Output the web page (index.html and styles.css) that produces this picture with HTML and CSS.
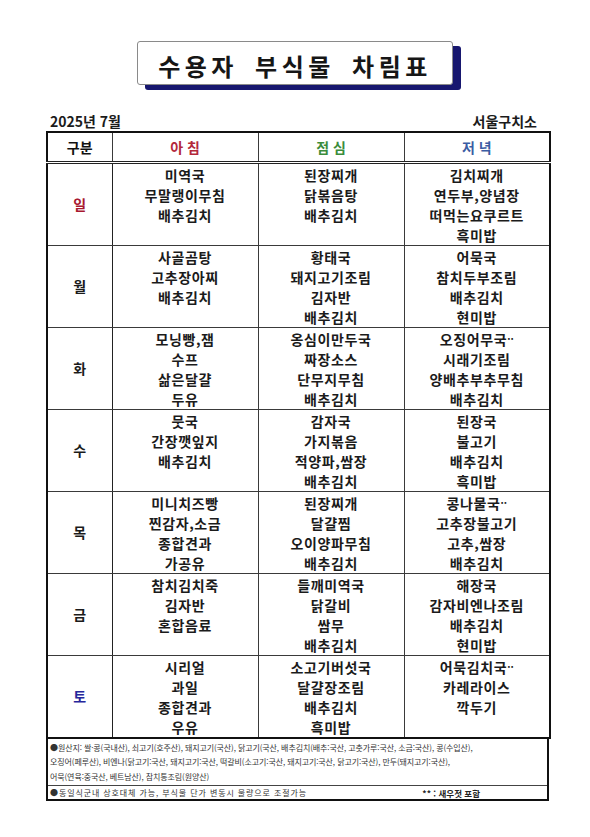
FILE: index.html
```html
<!DOCTYPE html>
<html lang="ko">
<head>
<meta charset="utf-8">
<title>수용자 부식물 차림표</title>
<link rel="stylesheet" href="styles.css">
</head>
<body>
<div class="page">
  <div class="title-wrap">
    <div class="title-box"><h1 class="title">수용자 부식물 차림표</h1></div>
  </div>
  <div class="sheet">
    <div class="meta">
      <span class="month">2025년 7월</span>
      <span class="org">서울구치소</span>
    </div>
    <table class="menu">
      <colgroup>
        <col class="c-day"><col class="c-meal"><col class="c-meal"><col class="c-meal">
      </colgroup>
      <thead>
        <tr>
          <th class="h-day">구분</th>
          <th class="h-bf">아 침</th>
          <th class="h-lu">점 심</th>
          <th class="h-di">저 녁</th>
        </tr>
      </thead>
      <tbody>
        <tr>
          <td class="day sun">일</td>
          <td class="meal"><div>미역국</div><div>무말랭이무침</div><div>배추김치</div></td>
          <td class="meal"><div>된장찌개</div><div>닭볶음탕</div><div>배추김치</div></td>
          <td class="meal"><div>김치찌개</div><div>연두부,양념장</div><div>떠먹는요쿠르트</div><div>흑미밥</div></td>
        </tr>
        <tr>
          <td class="day">월</td>
          <td class="meal"><div>사골곰탕</div><div>고추장아찌</div><div>배추김치</div></td>
          <td class="meal"><div>황태국</div><div>돼지고기조림</div><div>김자반</div><div>배추김치</div></td>
          <td class="meal"><div>어묵국</div><div>참치두부조림</div><div>배추김치</div><div>현미밥</div></td>
        </tr>
        <tr>
          <td class="day">화</td>
          <td class="meal"><div>모닝빵,잼</div><div>수프</div><div>삶은달걀</div><div>두유</div></td>
          <td class="meal"><div>옹심이만두국</div><div>짜장소스</div><div>단무지무침</div><div>배추김치</div></td>
          <td class="meal"><div>오징어무국<span class="mark">··</span></div><div>시래기조림</div><div>양배추부추무침</div><div>배추김치</div></td>
        </tr>
        <tr>
          <td class="day">수</td>
          <td class="meal"><div>뭇국</div><div>간장깻잎지</div><div>배추김치</div></td>
          <td class="meal"><div>감자국</div><div>가지볶음</div><div>적양파,쌈장</div><div>배추김치</div></td>
          <td class="meal"><div>된장국</div><div>불고기</div><div>배추김치</div><div>흑미밥</div></td>
        </tr>
        <tr>
          <td class="day">목</td>
          <td class="meal"><div>미니치즈빵</div><div>찐감자,소금</div><div>종합견과</div><div>가공유</div></td>
          <td class="meal"><div>된장찌개</div><div>달걀찜</div><div>오이양파무침</div><div>배추김치</div></td>
          <td class="meal"><div>콩나물국<span class="mark">··</span></div><div>고추장불고기</div><div>고추,쌈장</div><div>배추김치</div></td>
        </tr>
        <tr>
          <td class="day">금</td>
          <td class="meal"><div>참치김치죽</div><div>김자반</div><div>혼합음료</div></td>
          <td class="meal"><div>들깨미역국</div><div>닭갈비</div><div>쌈무</div><div>배추김치</div></td>
          <td class="meal"><div>해장국</div><div>감자비엔나조림</div><div>배추김치</div><div>현미밥</div></td>
        </tr>
        <tr>
          <td class="day sat">토</td>
          <td class="meal"><div>시리얼</div><div>과일</div><div>종합견과</div><div>우유</div></td>
          <td class="meal"><div>소고기버섯국</div><div>달걀장조림</div><div>배추김치</div><div>흑미밥</div></td>
          <td class="meal"><div>어묵김치국<span class="mark">··</span></div><div>카레라이스</div><div>깍두기</div></td>
        </tr>
      </tbody>
    </table>
    <div class="notes">
      <div class="origin">
        <p>●원산지: 쌀·콩(국내산), 쇠고기(호주산), 돼지고기(국산), 닭고기(국산, 배추김치(배추:국산, 고춧가루:국산, 소금:국산), 콩(수입산),</p>
        <p>오징어(페루산), 비엔나(닭고기:국산, 돼지고기:국산, 떡갈비(소고기:국산, 돼지고기:국산, 닭고기:국산), 만두(돼지고기:국산),</p>
        <p>어묵(연육:중국산, 베트남산), 참치통조림(원양산)</p>
      </div>
      <div class="notes-foot">
        <span class="sub">●동일식군내 상호대체 가능, 부식물 단가 변동시 물량으로 조절가능</span>
        <span class="legend">** : 새우젓 포함</span>
      </div>
    </div>
  </div>
</div>
</body>
</html>
```
FILE: styles.css
```css
* { box-sizing: border-box; }
html, body { margin: 0; padding: 0; background: #fff; }
body {
  font-family: "Noto Sans CJK KR", "Noto Sans", sans-serif;
  color: #1b1b1b;
}
.page { width: 590px; padding-top: 41px; }

.title-wrap { display: flex; justify-content: center; }
.title-box {
  width: 316px;
  height: 44px;
  background: #fff;
  border: 1px solid #8a8a8a;
  border-radius: 3px;
  box-shadow: 8px 5px 0 #17176f;
  display: flex;
  align-items: center;
  justify-content: center;
}
.title {
  margin: 0;
  padding-top: 5px;
  font-size: 24px;
  font-weight: 700;
  letter-spacing: 4.5px;
  word-spacing: 6px;
  color: #161616;
  line-height: 1;
}

.sheet { width: 503px; margin: 26px 0 0 46px; }
.meta {
  display: flex;
  justify-content: space-between;
  height: 20px;
  line-height: 20px;
  font-size: 14px;
  font-weight: 700;
  padding: 0 12px 0 4px;
}

.menu {
  width: 503px;
  border-collapse: collapse;
  table-layout: fixed;
  border: 2px solid #111;
}
.c-day { width: 65px; }
.c-meal { width: 146px; }
.menu th, .menu td {
  border: 1px solid #3a3a3a;
  text-align: center;
  padding: 0;
}
.menu th {
  height: 30px;
  font-size: 14px;
  font-weight: 700;
  border-bottom: 3px double #222;
}
.h-day { color: #111; }
.h-bf { color: #b3283a; }
.h-lu { color: #3b8c3b; }
.h-di { color: #3b5ca3; }

.day {
  font-size: 14px;
  font-weight: 700;
  vertical-align: middle;
  color: #1b1b1b;
}
.day.sun { color: #a8182f; }
.day.sat { color: #26269a; }
.menu .day { border-right-color: #222; }

.menu .meal {
  vertical-align: top;
  height: 81px;
  padding-top: 1px;
  font-size: 14px;
  font-weight: 700;
  line-height: 20px;
  letter-spacing: 0.6px;
}
.meal div { height: 20px; }
.mark { font-size: 10px; line-height: 10px; vertical-align: 2px; letter-spacing: 0; }

.notes {
  border: 2px solid #111;
  border-top: none;
  font-size: 8px;
  color: #333;
}
.origin { padding: 2px 2px 1px; }
.origin p { margin: 0; line-height: 14.5px; letter-spacing: -0.1px; white-space: nowrap; }
.notes-foot {
  border-top: 1px solid #444;
  display: flex;
  align-items: center;
  height: 14px;
  padding-left: 2px;
}
.sub { letter-spacing: 0.9px; }
.legend { margin-left: auto; margin-right: 67px; font-weight: 700; color: #222; font-size: 8.5px; }
```
